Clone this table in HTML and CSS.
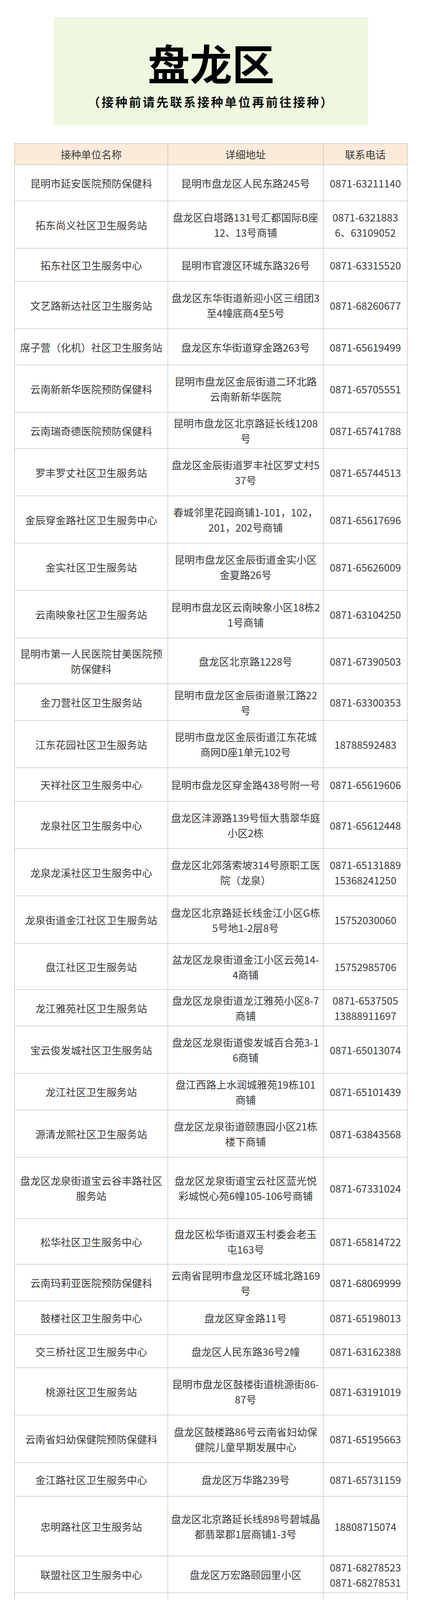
FILE: index.html
```html
<!DOCTYPE html>
<html lang="zh-CN">
<head>
<meta charset="utf-8">
<title>盘龙区 接种单位</title>
<link rel="stylesheet" href="styles.css">
</head>
<body>
<div class="banner">
  <h1 class="title">盘龙区</h1>
  <p class="subtitle">（接种前请先联系接种单位再前往接种）</p>
</div>

<div class="table">
  <div class="row head h54"><div class="cell">接种单位名称</div><div class="cell">详细地址</div><div class="cell">联系电话</div></div>
  <div class="row h93"><div class="cell">昆明市延安医院预防保健科</div><div class="cell">昆明市盘龙区人民东路245号</div><div class="cell">0871-63211140</div></div>
  <div class="row h121"><div class="cell">拓东尚义社区卫生服务站</div><div class="cell">盘龙区白塔路131号汇都国际B座<br>12、13号商铺</div><div class="cell">0871-6321883<br>6、63109052</div></div>
  <div class="row h85"><div class="cell">拓东社区卫生服务中心</div><div class="cell">昆明市官渡区环城东路326号</div><div class="cell">0871-63315520</div></div>
  <div class="row h121"><div class="cell">文艺路新达社区卫生服务站</div><div class="cell">盘龙区东华街道新迎小区三组团3<br>至4幢底商4至5号</div><div class="cell">0871-68260677</div></div>
  <div class="row h93"><div class="cell">席子营（化机）社区卫生服务站</div><div class="cell">盘龙区东华街道穿金路263号</div><div class="cell">0871-65619499</div></div>
  <div class="row h121"><div class="cell">云南新新华医院预防保健科</div><div class="cell">昆明市盘龙区金辰街道二环北路<br>云南新新华医院</div><div class="cell">0871-65705551</div></div>
  <div class="row h93"><div class="cell">云南瑞奇德医院预防保健科</div><div class="cell">昆明市盘龙区北京路延长线1208<br>号</div><div class="cell">0871-65741788</div></div>
  <div class="row h121"><div class="cell">罗丰罗丈社区卫生服务站</div><div class="cell">盘龙区金辰街道罗丰社区罗丈村5<br>37号</div><div class="cell">0871-65744513</div></div>
  <div class="row h121"><div class="cell">金辰穿金路社区卫生服务中心</div><div class="cell">春城邻里花园商铺1-101，102，<br>201，202号商铺</div><div class="cell">0871-65617696</div></div>
  <div class="row h121"><div class="cell">金实社区卫生服务站</div><div class="cell">昆明市盘龙区金辰街道金实小区<br>金夏路26号</div><div class="cell">0871-65626009</div></div>
  <div class="row h122"><div class="cell">云南映象社区卫生服务站</div><div class="cell">昆明市盘龙区云南映象小区18栋2<br>1号商铺</div><div class="cell">0871-63104250</div></div>
  <div class="row h117"><div class="cell">昆明市第一人民医院甘美医院预<br>防保健科</div><div class="cell">盘龙区北京路1228号</div><div class="cell">0871-67390503</div></div>
  <div class="row h94"><div class="cell">金刀营社区卫生服务站</div><div class="cell">昆明市盘龙区金辰街道景江路22<br>号</div><div class="cell">0871-63300353</div></div>
  <div class="row h121"><div class="cell">江东花园社区卫生服务站</div><div class="cell">昆明市盘龙区金辰街道江东花城<br>商网D座1单元102号</div><div class="cell">18788592483</div></div>
  <div class="row h86"><div class="cell">天祥社区卫生服务中心</div><div class="cell">昆明市盘龙区穿金路438号附一号</div><div class="cell">0871-65619606</div></div>
  <div class="row h121"><div class="cell">龙泉社区卫生服务中心</div><div class="cell">盘龙区沣源路139号恒大翡翠华庭<br>小区2栋</div><div class="cell">0871-65612448</div></div>
  <div class="row h121"><div class="cell">龙泉龙溪社区卫生服务中心</div><div class="cell">盘龙区北郊落索坡314号原职工医<br>院（龙泉）</div><div class="cell">0871-65131889<br>15368241250</div></div>
  <div class="row h122"><div class="cell">龙泉街道金江社区卫生服务站</div><div class="cell">盘龙区北京路延长线金江小区G栋<br>5号地1-2层8号</div><div class="cell">15752030060</div></div>
  <div class="row h118"><div class="cell">盘江社区卫生服务站</div><div class="cell">盆龙区龙泉街道金江小区云苑14-<br>4商铺</div><div class="cell">15752985706</div></div>
  <div class="row h93"><div class="cell">龙江雅苑社区卫生服务站</div><div class="cell">盘龙区龙泉街道龙江雅苑小区8-7<br>商铺</div><div class="cell">0871-6537505<br>13888911697</div></div>
  <div class="row h121"><div class="cell">宝云俊发城社区卫生服务站</div><div class="cell">盘龙区龙泉街道俊发城百合苑3-1<br>6商铺</div><div class="cell">0871-65013074</div></div>
  <div class="row h94"><div class="cell">龙江社区卫生服务站</div><div class="cell">盘江西路上水润城雅苑19栋101<br>商铺</div><div class="cell">0871-65101439</div></div>
  <div class="row h121"><div class="cell">源清龙熙社区卫生服务站</div><div class="cell">盘龙区龙泉街道颐惠园小区21栋<br>楼下商铺</div><div class="cell">0871-63843568</div></div>
  <div class="row h157"><div class="cell">盘龙区龙泉街道宝云谷丰路社区<br>服务站</div><div class="cell">盘龙区龙泉街道宝云社区蓝光悦<br>彩城悦心苑6幢105-106号商铺</div><div class="cell">0871-67331024</div></div>
  <div class="row h117"><div class="cell">松华社区卫生服务中心</div><div class="cell">盘龙区松华街道双玉村委会老玉<br>屯163号</div><div class="cell">0871-65814722</div></div>
  <div class="row h94"><div class="cell">云南玛莉亚医院预防保健科</div><div class="cell">云南省昆明市盘龙区环城北路169<br>号</div><div class="cell">0871-68069999</div></div>
  <div class="row h86"><div class="cell">鼓楼社区卫生服务中心</div><div class="cell">盘龙区穿金路11号</div><div class="cell">0871-65198013</div></div>
  <div class="row h85"><div class="cell">交三桥社区卫生服务中心</div><div class="cell">盘龙区人民东路36号2幢</div><div class="cell">0871-63162388</div></div>
  <div class="row h121"><div class="cell">桃源社区卫生服务站</div><div class="cell">昆明市盘龙区鼓楼街道桃源街86-<br>87号</div><div class="cell">0871-63191019</div></div>
  <div class="row h122"><div class="cell">云南省妇幼保健院预防保健科</div><div class="cell">盘龙区鼓楼路86号云南省妇幼保<br>健院儿童早期发展中心</div><div class="cell">0871-65195663</div></div>
  <div class="row h86"><div class="cell">金江路社区卫生服务中心</div><div class="cell">盘龙区万华路239号</div><div class="cell">0871-65731159</div></div>
  <div class="row h153"><div class="cell">忠明路社区卫生服务站</div><div class="cell">盘龙区北京路延长线898号碧城晶<br>都翡翠郡1层商铺1-3号</div><div class="cell">18808715074</div></div>
  <div class="row h94"><div class="cell">联盟社区卫生服务中心</div><div class="cell">盘龙区万宏路颐园里小区</div><div class="cell">0871-68278523<br>0871-68278531</div></div>
  <div class="row h155"><div class="cell">金菊路社区卫生服务站</div><div class="cell">昆明市盘龙区联盟街道金菊路云<br>锡花园小区一期东区物管楼一楼</div><div class="cell">0871-63610925</div></div>
  <div class="row h94"><div class="cell">联盟长寿路社区卫生服务站</div><div class="cell">昆明市盘龙区北新路532号</div><div class="cell">0871-68321541</div></div>
  <div class="row h86"><div class="cell">万宏国际社区卫生服务站</div><div class="cell">万宏国际4栋S1-4商铺</div><div class="cell">0871-66213045</div></div>
  <div class="row h156"><div class="cell">北泰花园社区卫生服务中心</div><div class="cell">昆明市盘龙区长青路100号北泰花<br>园QS1-101.QS1-102商铺</div><div class="cell">0871-65195787</div></div>
  <div class="row h82"><div class="cell">佳园社区卫生服务中心</div><div class="cell">昆明市盘龙区青云街道龙华路4号</div><div class="cell">18860779528</div></div>
  <div class="row h122"><div class="cell">云山园博社区卫生服务站</div><div class="cell">盘龙区青云街道云山社区白龙路<br>白龙寺339号</div><div class="cell">0871-63836570</div></div>
  <div class="row h85"><div class="cell">金沙社区卫生服务中心</div><div class="cell">昆明市盘龙区金沙路151号</div><div class="cell">087163826417</div></div>
  <div class="row h122"><div class="cell">金色交响社区卫生服务中心</div><div class="cell">昆明市盘龙区金色交响家园一期2<br>号综合楼1-4</div><div class="cell">0871-68582676</div></div>
  <div class="row h86"><div class="cell">青云社区卫生服务中心</div><div class="cell">昆明市盘龙区园博路13号</div><div class="cell">0871-65665232</div></div>
  <div class="row h121"><div class="cell">白沙润园社区卫生服务站</div><div class="cell">昆明市盘龙区青云街道青裕社区<br>白沙润园一期商铺22号</div><div class="cell">0871-63198776</div></div>
  <div class="row h93"><div class="cell">青龙顺城府社区卫生服务站</div><div class="cell">昆明市盘龙区金瓦路顺城府G4栋</div><div class="cell">0871-63804061</div></div>
  <div class="row h83"><div class="cell">茨坝社区卫生服务中心</div><div class="cell">盘龙区茨坝街道茨坝正街25号</div><div class="cell">0871-</div></div>
  <div class="row h93"><div class="cell">昆明市第二人民医院预防保健科</div><div class="cell">昆明市盘龙区龙泉路871号</div><div class="cell">0871-65653532</div></div>
  <div class="row h86"><div class="cell">昆机社区卫生服务中心</div><div class="cell">盘龙区龙泉路935号</div><div class="cell">0871-64884578</div></div>
  <div class="row h93"><div class="cell">重机社区卫生服务中心</div><div class="cell">盘龙区茨坝街道龙泉路672号附2<br>号</div><div class="cell">0871-64897848</div></div>
  <div class="row h86"><div class="cell">德惠小区社区卫生服务站</div><div class="cell">盘龙区德惠小区13栋</div><div class="cell">0871-65886875</div></div>
  <div class="row h121"><div class="cell">双龙社区卫生服务中心</div><div class="cell">盘龙区双龙街道乌龙社区前卫屯<br>村242号</div><div class="cell">0871-67162901</div></div>
  <div class="row h86"><div class="cell">阿子营社区卫生服务中心</div><div class="cell">盘龙区阿子营街道云桥街3号</div><div class="cell">0871-67958264</div></div>
  <div class="row h121"><div class="cell">滇源社区卫生服务中心</div><div class="cell">昆明市盘龙区滇源镇白邑村白马<br>路14号</div><div class="cell">0871-67957026</div></div>
</div>
</body>
</html>
```
FILE: styles.css
```css
* { box-sizing: border-box; }

html, body {
  margin: 0;
  padding: 0;
}

body {
  background: #ffffff;
  font-family: "Noto Sans CJK SC", "Noto Sans", sans-serif;
  color: #3a3a3a;
  padding-top: 44px;
}

.banner {
  width: 804px;
  height: 278px;
  margin: 0 auto;
  padding-top: 61px;
  background: #eef8e0;
  text-align: center;
}

.title {
  margin: 0;
  font-size: 108px;
  line-height: 108px;
  font-weight: 700;
  color: #000;
}

.subtitle {
  margin: 27px 0 0;
  font-size: 31px;
  line-height: 40px;
  font-weight: 700;
  letter-spacing: 4px;
  color: #111;
}

.table {
  width: 1006px;
  margin: 45px auto 0;
  border-top: 1px solid #b3b3ab;
  border-left: 1px solid #b3b3ab;
}

.row {
  display: grid;
  grid-template-columns: 392px 398px 215px;
}

.cell {
  display: flex;
  align-items: center;
  justify-content: center;
  text-align: center;
  padding: 0 3px;
  border-right: 1px solid #b3b3ab;
  border-bottom: 1px solid #b3b3ab;
  font-size: 26px;
  line-height: 39px;
}

.head .cell {
  background: #fdebd9;
}

.h54 { height: 54px; }
.h82 { height: 82px; }
.h83 { height: 83px; }
.h85 { height: 85px; }
.h86 { height: 86px; }
.h93 { height: 93px; }
.h94 { height: 94px; }
.h117 { height: 117px; }
.h118 { height: 118px; }
.h121 { height: 121px; }
.h122 { height: 122px; }
.h153 { height: 153px; }
.h155 { height: 155px; }
.h156 { height: 156px; }
.h157 { height: 157px; }
```
